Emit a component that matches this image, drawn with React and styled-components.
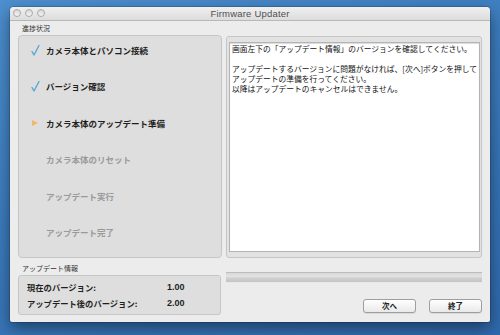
import styled, { createGlobalStyle } from 'styled-components'

const GlobalStyle = createGlobalStyle`
  html, body {
    margin: 0;
    padding: 0;
  }
  body {
    width: 500px;
    height: 335px;
    overflow: hidden;
    background: linear-gradient(160deg, #4d8fcf 0%, #3c7bbd 45%, #2f69ac 100%);
    font-family: "Noto Sans CJK JP", "Noto Sans", sans-serif;
  }
  #root {
    padding: 7px 10px 0 10px;
  }
`

const steps = [
  { label: 'カメラ本体とパソコン接続', state: 'done' },
  { label: 'バージョン確認', state: 'done' },
  { label: 'カメラ本体のアップデート準備', state: 'current' },
  { label: 'カメラ本体のリセット', state: 'todo' },
  { label: 'アップデート実行', state: 'todo' },
  { label: 'アップデート完了', state: 'todo' },
]

const Check = () => (
  <svg width="9" height="11" viewBox="0 0 9 11">
    <path d="M1 6.5 L3 10 L8 0.5" fill="none" stroke="#5aa6d6" strokeWidth="1.4" strokeLinecap="round" strokeLinejoin="round" />
  </svg>
)

const Arrow = () => (
  <svg width="8" height="8" viewBox="0 0 8 8">
    <path d="M1 1 L7 4 L1 7 Z" fill="#f6b468" />
  </svg>
)

const App = () => {
  return (
    <>
      <GlobalStyle />
      <Window>
        <TitleBar>
          <Lights>
            <Light />
            <Light />
            <Light />
          </Lights>
          <Title>Firmware Updater</Title>
        </TitleBar>
        <Body>
          <ProgressArea>
            <GroupLabel>進捗状況</GroupLabel>
            <StepPanel>
              {steps.map((s) => (
                <Step key={s.label} $state={s.state}>
                  <StepIcon>
                    {s.state === 'done' && <Check />}
                    {s.state === 'current' && <Arrow />}
                  </StepIcon>
                  {s.label}
                </Step>
              ))}
            </StepPanel>
          </ProgressArea>
          <MessagePanel>
            <MessageBox>
              <p>画面左下の「アップデート情報」のバージョンを確認してください。</p>
              <p>&nbsp;</p>
              <p>アップデートするバージョンに問題がなければ、[次へ]ボタンを押して</p>
              <p>アップデートの準備を行ってください。</p>
              <p>以降はアップデートのキャンセルはできません。</p>
            </MessageBox>
          </MessagePanel>
          <InfoArea>
            <GroupLabel>アップデート情報</GroupLabel>
            <InfoBox>
              <span>現在のバージョン:</span>
              <Value>1.00</Value>
              <span>アップデート後のバージョン:</span>
              <Value>2.00</Value>
            </InfoBox>
          </InfoArea>
          <ActionArea>
            <ProgressBar />
            <Buttons>
              <Button>次へ</Button>
              <Button>終了</Button>
            </Buttons>
          </ActionArea>
        </Body>
      </Window>
    </>
  )
}

const Window = styled.div`
  width: 480px;
  height: 315px;
  background: #ececec;
  border-radius: 4px 4px 2px 2px;
  box-shadow: 0 6px 16px rgba(0, 0, 0, 0.45), 0 0 0 1px rgba(0, 0, 0, 0.15);
  display: flex;
  flex-direction: column;
  overflow: hidden;
`

const TitleBar = styled.div`
  height: 13px;
  position: relative;
  display: flex;
  align-items: center;
  justify-content: center;
  background: linear-gradient(#f0f0f0, #dcdcdc);
  border-bottom: 1px solid #b8b8b8;
`

const Lights = styled.div`
  position: absolute;
  left: 3px;
  top: 2px;
  display: flex;
  gap: 4px;
`

const Light = styled.div`
  width: 8px;
  height: 8px;
  border-radius: 50%;
  box-sizing: border-box;
  border: 1px solid #a9a9a9;
  background: linear-gradient(#d8d8d8, #f4f4f4);
`

const Title = styled.div`
  font-family: "Liberation Sans", "DejaVu Sans", sans-serif;
  font-size: 9.5px;
  color: #505050;
  letter-spacing: 0.2px;
`

const Body = styled.div`
  display: grid;
  grid-template-columns: 204px 256px;
  grid-template-rows: 237px auto;
  column-gap: 4px;
  padding: 0 8px;
  flex: 1;
`

const ProgressArea = styled.div`
  display: flex;
  flex-direction: column;
`

const GroupLabel = styled.div`
  font-size: 7px;
  color: #333;
  height: 14px;
  line-height: 14px;
  padding-left: 4px;
`

const StepPanel = styled.div`
  flex: 1;
  box-sizing: border-box;
  background: #dedede;
  border: 1px solid #c6c6c6;
  border-radius: 4px;
  display: flex;
  flex-direction: column;
  gap: 24.4px;
  padding: 8px 0 0 10px;
`

const Step = styled.div`
  height: 12px;
  display: flex;
  align-items: center;
  font-size: 8.5px;
  font-weight: 700;
  color: ${(p) => (p.$state === 'todo' ? '#9a9a9a' : '#1e1e1e')};
`

const StepIcon = styled.div`
  width: 15px;
  display: flex;
  align-items: center;
  padding-left: 2px;
`

const MessagePanel = styled.div`
  align-self: end;
  height: 222px;
  box-sizing: border-box;
  background: #e2e2e2;
  border: 1px solid #c6c6c6;
  border-radius: 3px;
  padding: 5px 4px 5px 2px;
  display: flex;
`

const MessageBox = styled.div`
  flex: 1;
  background: #fff;
  border: 1px solid #b4b4b4;
  box-shadow: inset 0 1px 1px rgba(0, 0, 0, 0.15);
  padding: 1px 2px;
  font-size: 7.75px;
  color: #111;
  line-height: 10px;
  p {
    margin: 0;
    white-space: nowrap;
  }
`

const InfoArea = styled.div`
  display: flex;
  flex-direction: column;
  padding-top: 3px;
`

const InfoBox = styled.div`
  box-sizing: border-box;
  height: 40px;
  width: 203px;
  background: #dedede;
  border: 1px solid #c6c6c6;
  border-radius: 3px;
  display: grid;
  grid-template-columns: 140px auto;
  align-content: center;
  row-gap: 5px;
  padding: 0 0 0 8px;
  font-size: 8.3px;
  font-weight: 700;
  color: #1e1e1e;
  line-height: 11px;
`

const Value = styled.span`
  font-family: "Liberation Sans", sans-serif;
  font-size: 9px;
`

const ActionArea = styled.div`
  display: flex;
  flex-direction: column;
  padding-top: 14px;
`

const ProgressBar = styled.div`
  height: 11px;
  box-sizing: border-box;
  border-top: 1px solid #bdbdbd;
  background: linear-gradient(#d6d6d6 0%, #e4e4e4 35%, #cfcfcf 60%, #c4c4c4 100%);
  border-bottom: 1px solid #e8e8e8;
`

const Buttons = styled.div`
  display: flex;
  justify-content: flex-end;
  gap: 13px;
  margin-top: 16px;
`

const Button = styled.button`
  width: 53px;
  height: 14px;
  padding: 0;
  font-family: "Noto Sans CJK JP", sans-serif;
  font-size: 7.5px;
  font-weight: 700;
  color: #222;
  background: linear-gradient(#ffffff, #e9e9e9);
  border: 1px solid #9e9e9e;
  border-radius: 3px;
  box-shadow: 0 1px 0 rgba(0, 0, 0, 0.08);
  line-height: 12px;
`

export default App
